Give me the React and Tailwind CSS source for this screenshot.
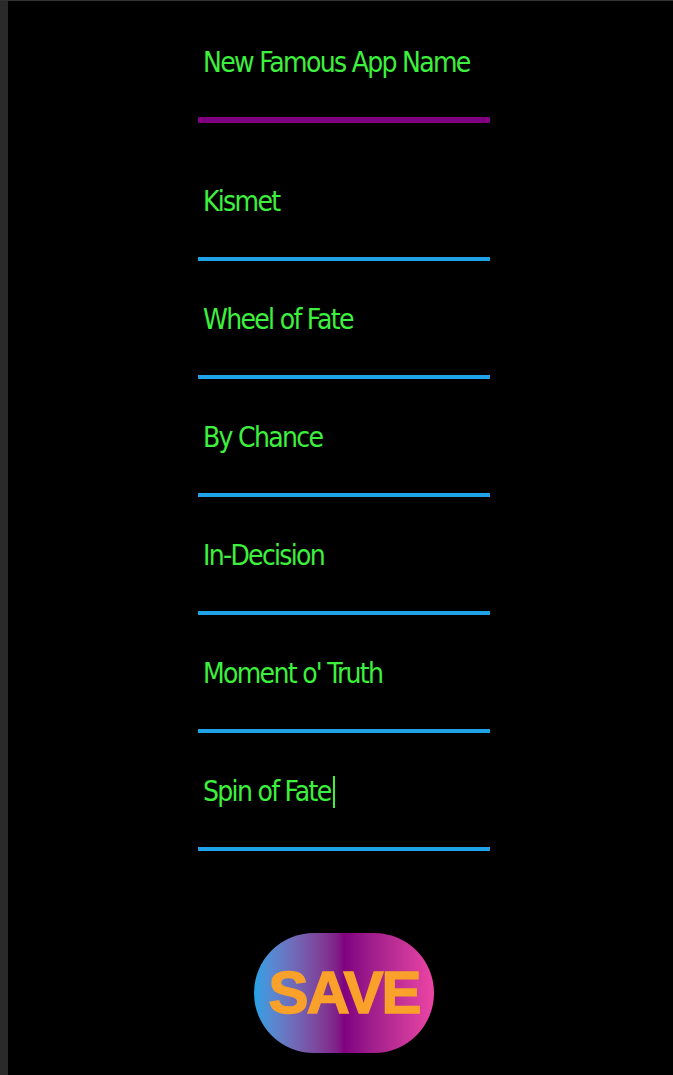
import {useState} from "react";

const names = ["Kismet", "Wheel of Fate", "By Chance", "In-Decision", "Moment o' Truth", "Spin of Fate"];

const NameRow = ({value, caret}) => {
    return (
        <div className="h-[118px] border-b-4 border-[#1fa2e6] flex items-center pl-[5px] pt-[4px] text-[28px] tracking-[-1.7px] whitespace-nowrap text-[#3ef03e]">
            <span>{value}</span>
            {caret ? <span className="w-[2px] h-[32px] bg-[#3ef03e] ml-[2px]"></span> : null}
        </div>
    )
}

const App = () => {
    const [appName] = useState("New Famous App Name");

    return (
        <div className="min-h-[1075px] bg-black flex border-t border-[#333]">
            {/*left strip*/}
            <div className="w-[8px] bg-[#2a2a2a] shrink-0"></div>
            <div className="flex-1 pl-[190px]" style={{fontFamily: '"Liberation Sans Narrow", "DejaVu Sans Condensed", sans-serif'}}>
                <div className="w-[292px]">
                    <div className="h-[122px] border-b-[6px] border-[#800080] flex items-center pl-[5px] pt-[8px] text-[28px] tracking-[-1.7px] whitespace-nowrap text-[#3ef03e]">
                        {appName}
                    </div>
                    <div className="mt-[20px] flex flex-col">
                        {names.map((item, index) => (
                            <NameRow key={index} value={item} caret={index === names.length - 1}/>
                        ))}
                    </div>
                </div>
                <div className="w-[292px] flex justify-center mt-[82px]">
                    <button
                        className="w-[180px] h-[120px] rounded-full bg-linear-to-r from-[#1fa2e6] via-[#800080] to-[#ec45a4] text-[#f9a12a] text-[60px] font-bold tracking-[-2px] [-webkit-text-stroke:1.5px_#f9a12a] flex items-center justify-center"
                        style={{fontFamily: '"Liberation Sans", Arial, sans-serif'}}>
                        SAVE
                    </button>
                </div>
            </div>
        </div>
    )
}

export default App;
